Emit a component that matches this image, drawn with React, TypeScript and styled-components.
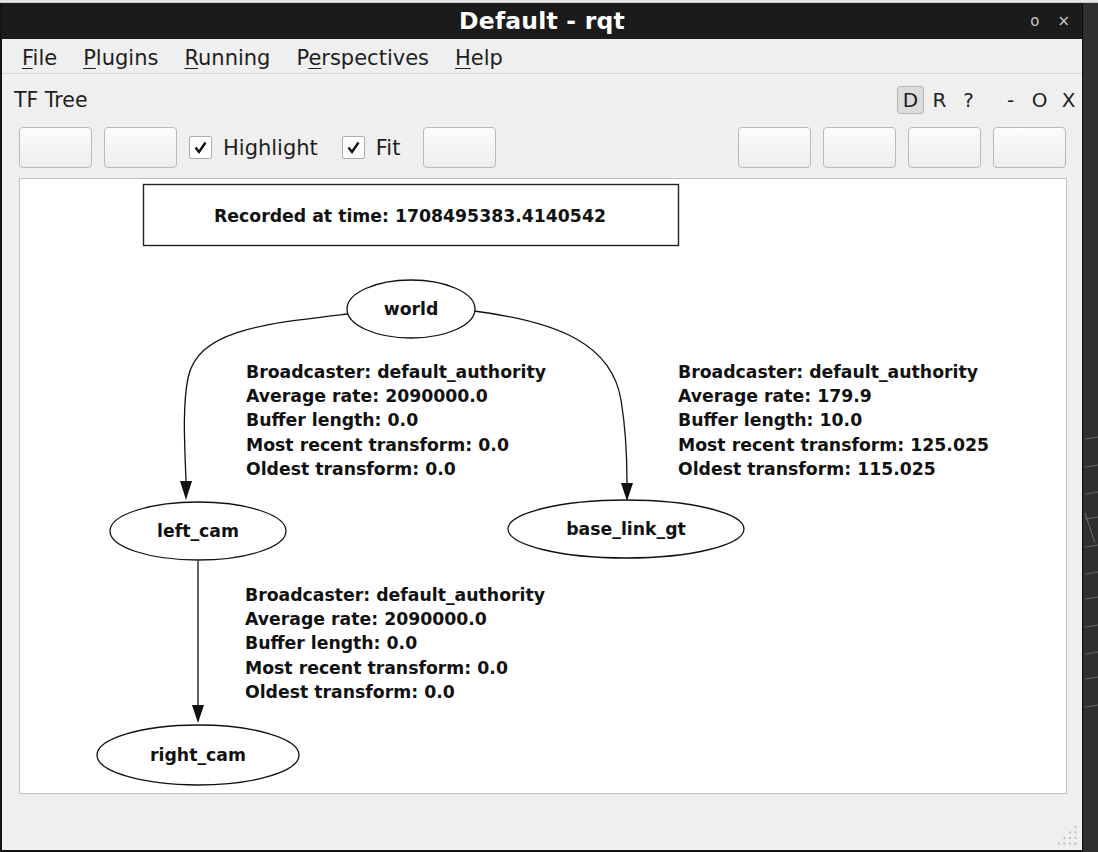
import React from "react";
import styled, { createGlobalStyle } from "styled-components";

const Global = createGlobalStyle`
  html, body { margin: 0; padding: 0; background: #2e2e2e; }
  body { font-family: "DejaVu Sans", "Liberation Sans", sans-serif; overflow: hidden; }
  * { box-sizing: border-box; }
`;

const Page = styled.div`
  width: 1098px;
  height: 852px;
  display: flex;
  flex-direction: column;
`;

const BackStrip = styled.div`
  height: 3px;
  background: #e4e4e4;
  border-bottom: 1px solid #c9c9c9;
`;

const Row = styled.div`
  flex: 1;
  display: flex;
`;

const Window = styled.div`
  width: 1083px;
  height: 849px;
  display: flex;
  flex-direction: column;
  background: #efefef;
  border-left: 2px solid #141414;
  border-right: 1px solid #0a0a0a;
  border-bottom: 2px solid #141414;
`;

const Desktop = styled.div`
  flex: 1;
  background: #2f2f2f;
  display: flex;
  flex-direction: column;
  padding-top: 430px;
`;

const TitleBar = styled.div`
  height: 36px;
  background: #1b1b1b;
  display: grid;
  grid-template-columns: 1fr auto 1fr;
  align-items: center;
  color: #fff;
`;

const Title = styled.div`
  font-weight: bold;
  font-size: 23.5px;
  letter-spacing: 0.2px;
`;

const TitleControls = styled.div`
  justify-self: end;
  display: flex;
  align-items: center;
  gap: 18px;
  padding-right: 12px;
  color: #c8c8c8;
  font-size: 15px;
`;

const MenuBar = styled.div`
  height: 35px;
  display: flex;
  align-items: center;
  padding: 3px 0 0 7px;
  border-bottom: 1px solid #d6d6d6;
`;

const MenuItem = styled.div`
  padding: 0 13px;
  font-size: 21px;
  color: #1e1e1e;
`;

const Mnemonic = styled.span`
  text-decoration: underline;
  text-underline-offset: 3px;
  text-decoration-thickness: 1px;
`;

const PluginHeader = styled.div`
  height: 50px;
  display: flex;
  align-items: center;
  padding: 2px 0 0 12px;
`;

const PluginTitle = styled.div`
  flex: 1;
  font-size: 20.5px;
  color: #1e1e1e;
`;

const HeaderGroup = styled.div<{ $gap: number; $lead?: number }>`
  display: flex;
  align-items: center;
  gap: ${(p) => p.$gap}px;
  margin-left: ${(p) => p.$lead ?? 0}px;
`;

const HeaderButton = styled.div<{ $active?: boolean }>`
  width: 27px;
  height: 28px;
  display: flex;
  align-items: center;
  justify-content: center;
  font-size: 20px;
  color: #1e1e1e;
  border-radius: 3px;
  border: 1px solid ${(p) => (p.$active ? "#b4b4b4" : "transparent")};
  background: ${(p) => (p.$active ? "#dcdcdc" : "transparent")};
`;

const Toolbar = styled.div`
  margin-top: 3px;
  height: 41px;
  display: flex;
  align-items: center;
  padding: 0 16px 0 17px;
  gap: 12px;
`;

const Spacer = styled.div`
  flex: 1;
`;

const ToolButton = styled.div`
  width: 73px;
  height: 41px;
  border: 1px solid #b9b9b9;
  border-radius: 4px;
  background: linear-gradient(#fcfcfc, #ededed);
`;

const CheckLabel = styled.label<{ $trail: number }>`
  display: flex;
  align-items: center;
  gap: 11px;
  font-size: 21px;
  color: #1e1e1e;
  margin-right: ${(p) => p.$trail}px;
`;

const CheckBox = styled.span`
  width: 23px;
  height: 23px;
  border: 1px solid #adadad;
  border-radius: 2px;
  background: #fff;
  display: flex;
  align-items: center;
  justify-content: center;
`;

const Canvas = styled.div`
  margin: 10px 15px 0 17px;
  height: 616px;
  background: #fff;
  border: 1px solid #c2c2c2;
`;

const GraphSvg = styled.svg`
  display: block;
  width: 100%;
  height: 100%;
  font-family: "DejaVu Sans", "Liberation Sans", sans-serif;
  font-weight: bold;
`;

const StatusBar = styled.div`
  flex: 1;
  display: flex;
  justify-content: flex-end;
  align-items: flex-end;
  padding: 0 2px 2px 0;
`;

const DeskLines = styled.svg`
  display: block;
`;

const Check = () => (
  <svg width="15" height="15" viewBox="0 0 15 15">
    <path d="M2.5 7.5 L6 12 L12.5 2.5" fill="none" stroke="#111" strokeWidth="2.4" strokeLinejoin="miter" />
  </svg>
);

const Grip = () => {
  const dots: [number, number][] = [];
  for (let r = 0; r < 4; r++) {
    for (let c = 3 - r; c < 4; c++) {
      dots.push([2 + c * 5.5, 2 + r * 5.5]);
    }
  }
  return (
    <svg width="24" height="24" viewBox="0 0 24 24">
      {dots.map(([x, y], i) => (
        <rect key={i} x={x} y={y} width="2" height="2" fill="#bdbdbd" />
      ))}
    </svg>
  );
};

const FS = 17.3;

const info = (x: number, y: number, lines: string[]) => (
  <text x={x} fontSize={FS} fill="#111">
    {lines.map((l, i) => (
      <tspan key={i} x={x} y={y + i * 24.2}>
        {l}
      </tspan>
    ))}
  </text>
);

const Node = ({ cx, cy, rx, ry, label }: { cx: number; cy: number; rx: number; ry: number; label: string }) => (
  <g>
    <ellipse cx={cx} cy={cy} rx={rx} ry={ry} fill="#fff" stroke="#111" strokeWidth="1.3" />
    <text x={cx} y={cy + 6} textAnchor="middle" fontSize={FS} fill="#111">
      {label}
    </text>
  </g>
);

const Graph = () => (
  <GraphSvg viewBox="0 0 1046 614">
    <g transform="translate(-20 -179)">
      <rect x="143.5" y="184.5" width="535" height="61" fill="#fff" stroke="#222" strokeWidth="1.4" />
      <text x="410" y="222" textAnchor="middle" fontSize={FS} fill="#111">
        Recorded at time: 1708495383.4140542
      </text>

      <path d="M348 314 C262 324 198 330 188 378 C182 408 185 450 186 481" fill="none" stroke="#111" strokeWidth="1.3" />
      <polygon points="180,481 192,481 186,500" fill="#111" />

      <path d="M474 311 C560 322 612 345 621 400 C626 430 627 458 627 483" fill="none" stroke="#111" strokeWidth="1.3" />
      <polygon points="621,483 633,483 627,501" fill="#111" />

      <path d="M198 561 L198 705" fill="none" stroke="#111" strokeWidth="1.3" />
      <polygon points="192,705 204,705 198,723" fill="#111" />

      <Node cx={411} cy={309} rx={64} ry={29} label="world" />
      <Node cx={198} cy={531} rx={88} ry={29} label="left_cam" />
      <Node cx={626} cy={529} rx={118} ry={29} label="base_link_gt" />
      <Node cx={198} cy={755} rx={101} ry={30} label="right_cam" />

      {info(246, 378, [
        "Broadcaster: default_authority",
        "Average rate: 2090000.0",
        "Buffer length: 0.0",
        "Most recent transform: 0.0",
        "Oldest transform: 0.0",
      ])}
      {info(678, 378, [
        "Broadcaster: default_authority",
        "Average rate: 179.9",
        "Buffer length: 10.0",
        "Most recent transform: 125.025",
        "Oldest transform: 115.025",
      ])}
      {info(245, 601, [
        "Broadcaster: default_authority",
        "Average rate: 2090000.0",
        "Buffer length: 0.0",
        "Most recent transform: 0.0",
        "Oldest transform: 0.0",
      ])}
    </g>
  </GraphSvg>
);

const menus: { pre: string; key: string; post: string }[] = [
  { pre: "", key: "F", post: "ile" },
  { pre: "", key: "P", post: "lugins" },
  { pre: "", key: "R", post: "unning" },
  { pre: "P", key: "e", post: "rspectives" },
  { pre: "", key: "H", post: "elp" },
];

export default function App() {
  return (
    <Page>
      <Global />
      <BackStrip />
      <Row>
        <Window>
          <TitleBar>
            <div />
            <Title>Default - rqt</Title>
            <TitleControls>
              <span>o</span>
              <span>×</span>
            </TitleControls>
          </TitleBar>
          <MenuBar>
            {menus.map((m) => (
              <MenuItem key={m.pre + m.key + m.post}>
                {m.pre}
                <Mnemonic>{m.key}</Mnemonic>
                {m.post}
              </MenuItem>
            ))}
          </MenuBar>
          <PluginHeader>
            <PluginTitle>TF Tree</PluginTitle>
            <HeaderGroup $gap={2}>
              <HeaderButton $active>D</HeaderButton>
              <HeaderButton>R</HeaderButton>
              <HeaderButton>?</HeaderButton>
            </HeaderGroup>
            <HeaderGroup $gap={2} $lead={15}>
              <HeaderButton>-</HeaderButton>
              <HeaderButton>O</HeaderButton>
              <HeaderButton>X</HeaderButton>
            </HeaderGroup>
          </PluginHeader>
          <Toolbar>
            <ToolButton />
            <ToolButton />
            <CheckLabel $trail={12}>
              <CheckBox>
                <Check />
              </CheckBox>
              Highlight
            </CheckLabel>
            <CheckLabel $trail={11}>
              <CheckBox>
                <Check />
              </CheckBox>
              Fit
            </CheckLabel>
            <ToolButton />
            <Spacer />
            <ToolButton />
            <ToolButton />
            <ToolButton />
            <ToolButton />
          </Toolbar>
          <Canvas>
            <Graph />
          </Canvas>
          <StatusBar>
            <Grip />
          </StatusBar>
        </Window>
        <Desktop>
          <DeskLines width="15" height="290" viewBox="0 0 15 290">
            {[0, 28, 55, 80, 108, 135, 160, 188, 215, 240, 268].map((y, i) => (
              <line key={i} x1="2" y1={y + 6} x2="15" y2={y + 4} stroke="#6a6a6a" strokeWidth="1" />
            ))}
            <line x1="2" y1="80" x2="12" y2="110" stroke="#6a6a6a" strokeWidth="1" />
          </DeskLines>
        </Desktop>
      </Row>
    </Page>
  );
}
